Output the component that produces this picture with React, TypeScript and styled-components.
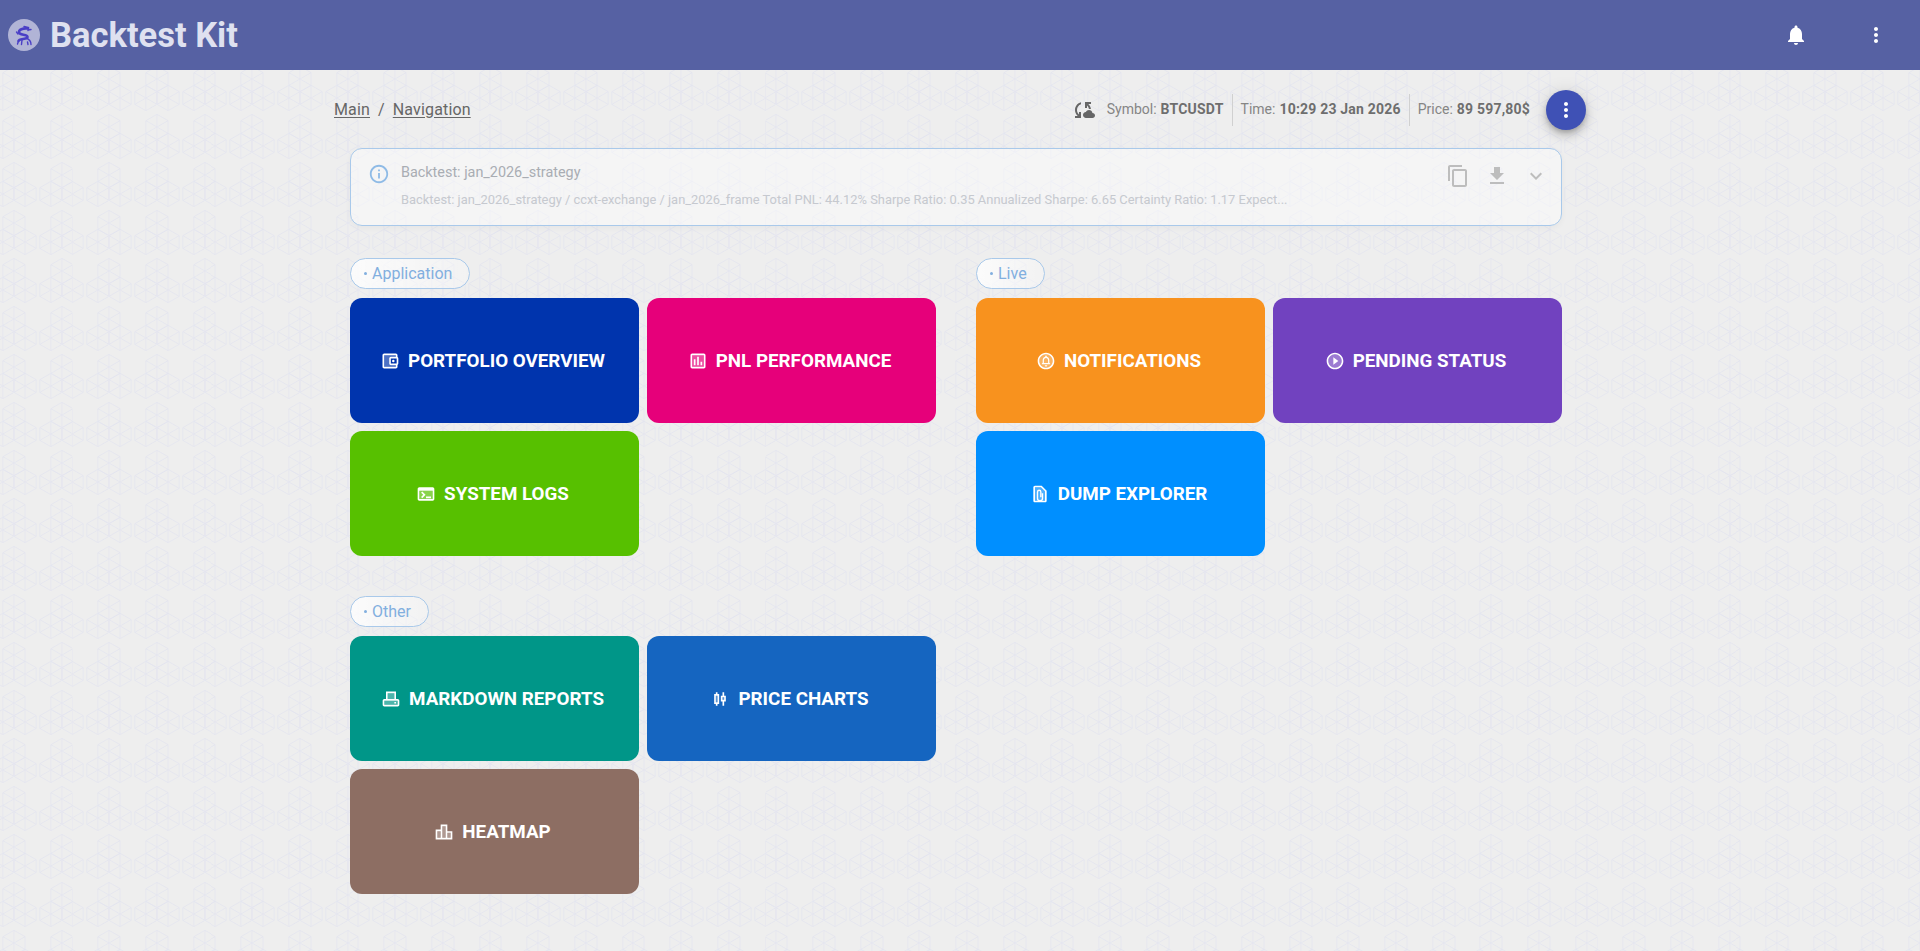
import styled, { createGlobalStyle } from 'styled-components';
import { ReactNode } from 'react';

const spokes = (cx: number, cy: number) => {
  const r = 12.7;
  const dx = 11;
  const pts = [
    [cx, cy - r],
    [cx + dx, cy - r / 2],
    [cx + dx, cy + r / 2],
    [cx, cy + r],
    [cx - dx, cy + r / 2],
    [cx - dx, cy - r / 2],
  ];
  const hex = `M${pts.map((p) => p.join(' ')).join('L')}Z`;
  const lines = pts.map((p) => `M${cx} ${cy}L${p.join(' ')}`).join('');
  return hex + lines;
};

const tile = `<svg xmlns='http://www.w3.org/2000/svg' width='47.67' height='48' viewBox='0 0 47.67 48'><path fill='none' stroke='#e4e5ef' stroke-width='.8' d='${spokes(23.83, 15)}${spokes(12.83, 34)}${spokes(34.83, 34)}'/></svg>`;

const GlobalStyle = createGlobalStyle`
  html, body {
    margin: 0;
    padding: 0;
  }
  body {
    font-family: Roboto, "Liberation Sans", sans-serif;
    background-color: #eeeeee;
    background-image: url("data:image/svg+xml,${encodeURIComponent(tile)}");
    background-size: 47.67px 48px;
    background-position: 37.76px 16.3px;
    min-height: 951px;
    overflow: hidden;
  }
`;

const AppBar = styled.header`
  display: flex;
  align-items: center;
  height: 70px;
  padding: 0 32px 0 8px;
  background: #5661a3;
`;

const LogoCircle = styled.div`
  display: flex;
  align-items: center;
  justify-content: center;
  width: 32px;
  height: 32px;
  margin-right: 10px;
  border-radius: 50%;
  background: #b1b4d6;
`;

const Title = styled.h1`
  flex: 1;
  margin: 0;
  font-size: 34.5px;
  font-weight: 700;
  line-height: 68px;
  color: #dfe1f0;
`;

const BarButton = styled.button<{ $right: number }>`
  display: flex;
  padding: 0;
  margin-right: ${(p) => p.$right}px;
  border: none;
  background: none;
  color: #fff;
`;

const Page = styled.main`
  width: 1252px;
  margin: 0 auto;
`;

const TopRow = styled.div`
  display: flex;
  align-items: center;
  justify-content: space-between;
  padding-top: 20px;
`;

const Crumbs = styled.nav`
  display: flex;
  gap: 8px;
  padding-bottom: 2px;
  font-size: 16px;
  letter-spacing: 0.15px;
  color: #666;
`;

const Crumb = styled.a`
  text-decoration: underline;
  text-underline-offset: 2px;
`;

const Status = styled.div`
  display: flex;
  align-items: center;
  color: #666;
`;

const StatusIcon = styled.div`
  display: flex;
  margin-right: 4px;
`;

const StatusItem = styled.div<{ $divider?: boolean }>`
  display: flex;
  align-items: center;
  box-sizing: border-box;
  height: 32px;
  padding: 0 8px 2px;
  font-size: 14px;
  color: #858585;
  border-left: ${(p) => (p.$divider ? '1px solid #d0d0d0' : 'none')};

  b {
    margin-left: 4px;
    font-weight: 700;
    letter-spacing: 0.2px;
    color: #6e6e6e;
  }
`;

const Fab = styled.button`
  display: flex;
  align-items: center;
  justify-content: center;
  width: 40px;
  height: 40px;
  margin-left: 8px;
  padding: 0;
  border: none;
  border-radius: 50%;
  background: #3f51b5;
  color: #fff;
  box-shadow: 0 3px 5px -1px rgba(0, 0, 0, 0.2), 0 6px 10px 0 rgba(0, 0, 0, 0.14),
    0 1px 18px 0 rgba(0, 0, 0, 0.12);
`;

const Body = styled.div`
  padding: 18px 24px 0 16px;
`;

const Card = styled.section`
  display: flex;
  box-sizing: border-box;
  height: 78px;
  padding: 14px 13px 0 17px;
  border: 1px solid #a9c9ea;
  border-radius: 12px;
  background: rgba(255, 255, 255, 0.42);
  box-shadow: 0 2px 6px rgba(0, 0, 0, 0.04);
`;

const CardIcon = styled.div`
  height: 22px;
  margin-right: 11px;
  color: #8fbbe6;
`;

const CardText = styled.div`
  flex: 1;
  min-width: 0;
`;

const CardTitle = styled.div`
  font-size: 14.4px;
  line-height: 20px;
  color: #a9adb3;
`;

const CardLine = styled.div`
  margin-top: 8px;
  font-size: 12.9px;
  line-height: 18px;
  color: #c6c9cf;
  white-space: nowrap;
`;

const CardActions = styled.div`
  display: flex;
  align-items: flex-start;
  gap: 15px;
  margin-top: 1px;
  color: #bdbdbd;
`;

const Columns = styled.div`
  display: grid;
  grid-template-columns: 586px 586px;
  column-gap: 40px;
  row-gap: 40px;
  margin-top: 32px;
`;

const Section = styled.div`
  min-width: 0;
`;

const Chip = styled.div`
  display: inline-flex;
  align-items: center;
  box-sizing: border-box;
  height: 31px;
  padding: 0 17px 0 13px;
  border: 1px solid #a9c9ea;
  border-radius: 16px;
  background: linear-gradient(90deg, rgba(255, 255, 255, 0.8), rgba(255, 255, 255, 0.25));
  font-size: 16px;
  color: #82afdf;

  &::before {
    content: '';
    width: 3px;
    height: 3px;
    margin-right: 5px;
    border-radius: 50%;
    background: #82afdf;
  }
`;

const Tiles = styled.div`
  display: grid;
  grid-template-columns: 289px 289px;
  grid-auto-rows: 125px;
  gap: 8px;
  margin-top: 9px;
`;

const Tile = styled.button<{ $bg: string }>`
  display: flex;
  align-items: center;
  justify-content: center;
  gap: 8px;
  padding: 0 4px 0 0;
  border: none;
  border-radius: 12px;
  background: ${(p) => p.$bg};
  color: #fff;
  font-family: inherit;
  font-size: 18.8px;
  font-weight: 700;
  text-transform: uppercase;
`;

const Glyph = ({ size = 24, children }: { size?: number; children: ReactNode }) => (
  <svg width={size} height={size} viewBox='0 0 24 24' fill='currentColor'>
    {children}
  </svg>
);

const Tone = ({ d }: { d: string }) => <path d={d} opacity={0.3} />;

const WalletIcon = () => (
  <Glyph size={20}>
    <Tone d='M13 17c-1.1 0-2-.9-2-2V9c0-1.1.9-2 2-2h6V5H5v14h14v-2h-6z' />
    <path d='M21 7.28V5c0-1.1-.9-2-2-2H5c-1.11 0-2 .9-2 2v14c0 1.1.89 2 2 2h14c1.1 0 2-.9 2-2v-2.28c.59-.35 1-.98 1-1.72V9c0-.74-.41-1.38-1-1.72zM20 9v6h-7V9h7zM5 19V5h14v2h-6c-1.1 0-2 .9-2 2v6c0 1.1.9 2 2 2h6v2H5z' />
    <circle cx='16' cy='12' r='1.5' />
  </Glyph>
);

const AssessmentIcon = () => (
  <Glyph size={20}>
    <Tone d='M5 5h14v14H5z' />
    <path d='M19 3H5c-1.1 0-2 .9-2 2v14c0 1.1.9 2 2 2h14c1.1 0 2-.9 2-2V5c0-1.1-.9-2-2-2zm0 16H5V5h14v14zM7 10h2v7H7zm4-3h2v10h-2zm4 6h2v4h-2z' />
  </Glyph>
);

const TerminalIcon = () => (
  <Glyph size={20}>
    <Tone d='M4 8h16v10H4z' />
    <path d='M20 4H4c-1.1 0-2 .9-2 2v12c0 1.1.9 2 2 2h16c1.1 0 2-.9 2-2V6c0-1.1-.9-2-2-2zm0 14H4V8h16v10zm-2-1h-6v-2h6v2zM7.5 17l-1.41-1.41L8.67 13l-2.59-2.59L7.5 9l4 4-4 4z' />
  </Glyph>
);

const BellCircleIcon = () => (
  <Glyph size={20}>
    <Tone d='M12 4c-4.41 0-8 3.59-8 8s3.59 8 8 8 8-3.59 8-8-3.59-8-8-8z' />
    <path d='M12 2C6.48 2 2 6.48 2 12s4.48 10 10 10 10-4.48 10-10S17.52 2 12 2zm0 18c-4.41 0-8-3.59-8-8s3.59-8 8-8 8 3.59 8 8-3.59 8-8 8zm0-1.5c.83 0 1.5-.67 1.5-1.5h-3c0 .83.67 1.5 1.5 1.5zm5-2.5v-1l-1-1v-2.61C16 9.27 14.97 7.47 13 7v-.5c0-.57-.43-1-1-1s-1 .43-1 1V7c-1.97.47-3 2.27-3 4.39V14l-1 1v1h10zm-7.5-1.5v-3.1c0-1.5.9-2.9 2.5-2.9s2.5 1.4 2.5 2.9v3.1h-5z' />
  </Glyph>
);

const PlayCircleIcon = () => (
  <Glyph size={20}>
    <Tone d='M12 4c-4.41 0-8 3.59-8 8s3.59 8 8 8 8-3.59 8-8-3.59-8-8-8z' />
    <path d='M12 2C6.48 2 2 6.48 2 12s4.48 10 10 10 10-4.48 10-10S17.52 2 12 2zm0 18c-4.41 0-8-3.59-8-8s3.59-8 8-8 8 3.59 8 8-3.59 8-8 8zm-2-3.5l6-4.5-6-4.5z' />
  </Glyph>
);

const FileClipIcon = () => (
  <Glyph size={20}>
    <Tone d='M14 4H6v16h12V8z' />
    <path d='M14 2H6c-1.1 0-2 .9-2 2v16c0 1.1.9 2 2 2h12c1.1 0 2-.9 2-2V8l-6-6zM6 20V4h7.17L18 8.83V20H6z' />
    <path fill='none' stroke='currentColor' strokeWidth='1.6' d='M15 11v6a3 3 0 0 1-6 0V9.5a2 2 0 0 1 4 0V16' />
  </Glyph>
);

const RegisterIcon = () => (
  <Glyph size={20}>
    <Tone d='M4 14h16v5H4zM8 5h8v7H8z' />
    <path d='M18 12V3H6v9H4c-1.1 0-2 .9-2 2v5c0 1.1.9 2 2 2h16c1.1 0 2-.9 2-2v-5c0-1.1-.9-2-2-2h-2zM8 5h8v7H8V5zm12 14H4v-5h16v5z' />
    <path d='M16 15.5h2v2h-2z' />
  </Glyph>
);

const CandleIcon = () => (
  <Glyph size={20}>
    <Tone d='M7 8h2v8H7zM15 10h2v3h-2z' />
    <path d='M9 4H7v2H5v12h2v2h2v-2h2V6H9V4zm0 12H7V8h2v8zM19 8h-2V4h-2v4h-2v7h2v5h2v-5h2V8zm-2 5h-2v-3h2v3z' />
  </Glyph>
);

const LeaderboardIcon = () => (
  <Glyph size={20}>
    <Tone d='M4 11h4v8H4zM10 5h4v14h-4zM16 13h4v6h-4z' />
    <path d='M16 11V3H8v6H2v12h20V11h-6zm-6-6h4v14h-4V5zm-6 6h4v8H4v-8zm16 8h-4v-6h4v6z' />
  </Glyph>
);

const DotsIcon = () => (
  <Glyph>
    <path d='M12 8c1.1 0 2-.9 2-2s-.9-2-2-2-2 .9-2 2 .9 2 2 2zm0 2c-1.1 0-2 .9-2 2s.9 2 2 2 2-.9 2-2-.9-2-2-2zm0 6c-1.1 0-2 .9-2 2s.9 2 2 2 2-.9 2-2-.9-2-2-2z' />
  </Glyph>
);

const BellIcon = () => (
  <Glyph>
    <path d='M12 22c1.1 0 2-.9 2-2h-4c0 1.1.89 2 2 2zm6-6v-5c0-3.07-1.64-5.64-4.5-6.32V4c0-.83-.67-1.5-1.5-1.5s-1.5.67-1.5 1.5v.68C7.63 5.36 6 7.92 6 11v5l-2 2v1h16v-1l-2-2z' />
  </Glyph>
);

const CloudSyncIcon = () => (
  <Glyph>
    <path d='M21.5 14.98c-.02 0-.03 0-.05.01C21.2 13.3 19.76 12 18 12c-1.4 0-2.6.83-3.16 2.02C13.26 14.1 12 15.4 12 17c0 1.66 1.34 3 3 3l6.5-.02c1.38 0 2.5-1.12 2.5-2.5s-1.12-2.5-2.5-2.5zM10 4.26v2.09C7.67 7.18 6 9.39 6 12c0 1.77.78 3.34 2 4.44V14h2v6H4v-2h2.73C5.06 16.54 4 14.4 4 12c0-3.73 2.55-6.85 6-7.74zM20 6h-2.73c1.43 1.26 2.41 3.01 2.66 5h-2.02C17.68 9.64 16.98 8.45 16 7.56V10h-2V4h6v2z' />
  </Glyph>
);

const InfoIcon = () => (
  <Glyph size={22}>
    <path d='M11 7h2v2h-2zm0 4h2v6h-2zm1-9C6.48 2 2 6.48 2 12s4.48 10 10 10 10-4.48 10-10S17.52 2 12 2zm0 18c-4.41 0-8-3.59-8-8s3.59-8 8-8 8 3.59 8 8-3.59 8-8 8z' />
  </Glyph>
);

const CopyIcon = () => (
  <Glyph>
    <path d='M16 1H4c-1.1 0-2 .9-2 2v14h2V3h12V1zm3 4H8c-1.1 0-2 .9-2 2v14c0 1.1.9 2 2 2h11c1.1 0 2-.9 2-2V7c0-1.1-.9-2-2-2zm0 16H8V7h11v14z' />
  </Glyph>
);

const DownloadIcon = () => (
  <Glyph>
    <path d='M19 9h-4V3H9v6H5l7 7 7-7zM5 18v2h14v-2H5z' />
  </Glyph>
);

const ChevronIcon = () => (
  <Glyph>
    <path d='M16.59 8.59 12 13.17 7.41 8.59 6 10l6 6 6-6z' />
  </Glyph>
);

const DragonIcon = () => (
  <svg width='18' height='21' viewBox='0 0 18 21' fill='none' stroke='#4a3fc6' strokeLinecap='round'>
    <path strokeWidth='2.6' d='M13 3.5C8 3 3.5 4.5 4 7.5c.5 3 8.5 1.5 8.5 4.5S4 13 3.5 16' />
    <path strokeWidth='1.4' d='M9 1.5l4.5 1-.5 3M13 5l3-.5M3 9L1.5 7M3.5 16l-1 3M7 15l-.5 4.5M11 13c3 1 5 3.5 5 6.5M12.5 17l.5 2.5' />
  </svg>
);

type Item = { label: string; color: string; icon: ReactNode };

const groups: { title: string; items: Item[] }[] = [
  {
    title: 'Application',
    items: [
      { label: 'Portfolio Overview', color: '#0034ad', icon: <WalletIcon /> },
      { label: 'PNL Performance', color: '#e6007a', icon: <AssessmentIcon /> },
      { label: 'System Logs', color: '#57c000', icon: <TerminalIcon /> },
    ],
  },
  {
    title: 'Live',
    items: [
      { label: 'Notifications', color: '#f8921e', icon: <BellCircleIcon /> },
      { label: 'Pending Status', color: '#7142bf', icon: <PlayCircleIcon /> },
      { label: 'Dump Explorer', color: '#008fff', icon: <FileClipIcon /> },
    ],
  },
  {
    title: 'Other',
    items: [
      { label: 'Markdown Reports', color: '#009688', icon: <RegisterIcon /> },
      { label: 'Price Charts', color: '#1565c0', icon: <CandleIcon /> },
      { label: 'Heatmap', color: '#8d6e63', icon: <LeaderboardIcon /> },
    ],
  },
];

const App = () => (
  <>
    <GlobalStyle />
    <AppBar>
      <LogoCircle>
        <DragonIcon />
      </LogoCircle>
      <Title>Backtest Kit</Title>
      <BarButton $right={56}>
        <BellIcon />
      </BarButton>
      <BarButton $right={0}>
        <DotsIcon />
      </BarButton>
    </AppBar>
    <Page>
      <TopRow>
        <Crumbs>
          <Crumb>Main</Crumb>
          <span>/</span>
          <Crumb>Navigation</Crumb>
        </Crumbs>
        <Status>
          <StatusIcon>
            <CloudSyncIcon />
          </StatusIcon>
          <StatusItem>
            Symbol: <b>BTCUSDT</b>
          </StatusItem>
          <StatusItem $divider>
            Time: <b>10:29 23 Jan 2026</b>
          </StatusItem>
          <StatusItem $divider>
            Price: <b>89 597,80$</b>
          </StatusItem>
          <Fab>
            <DotsIcon />
          </Fab>
        </Status>
      </TopRow>
      <Body>
        <Card>
          <CardIcon>
            <InfoIcon />
          </CardIcon>
          <CardText>
            <CardTitle>Backtest: jan_2026_strategy</CardTitle>
            <CardLine>
              Backtest: jan_2026_strategy / ccxt-exchange / jan_2026_frame Total PNL: 44.12% Sharpe Ratio: 0.35
              Annualized Sharpe: 6.65 Certainty Ratio: 1.17 Expect...
            </CardLine>
          </CardText>
          <CardActions>
            <CopyIcon />
            <DownloadIcon />
            <ChevronIcon />
          </CardActions>
        </Card>
        <Columns>
          {groups.map((group) => (
            <Section key={group.title}>
              <Chip>{group.title}</Chip>
              <Tiles>
                {group.items.map((item) => (
                  <Tile key={item.label} $bg={item.color}>
                    {item.icon}
                    {item.label}
                  </Tile>
                ))}
              </Tiles>
            </Section>
          ))}
        </Columns>
      </Body>
    </Page>
  </>
);

export default App;
